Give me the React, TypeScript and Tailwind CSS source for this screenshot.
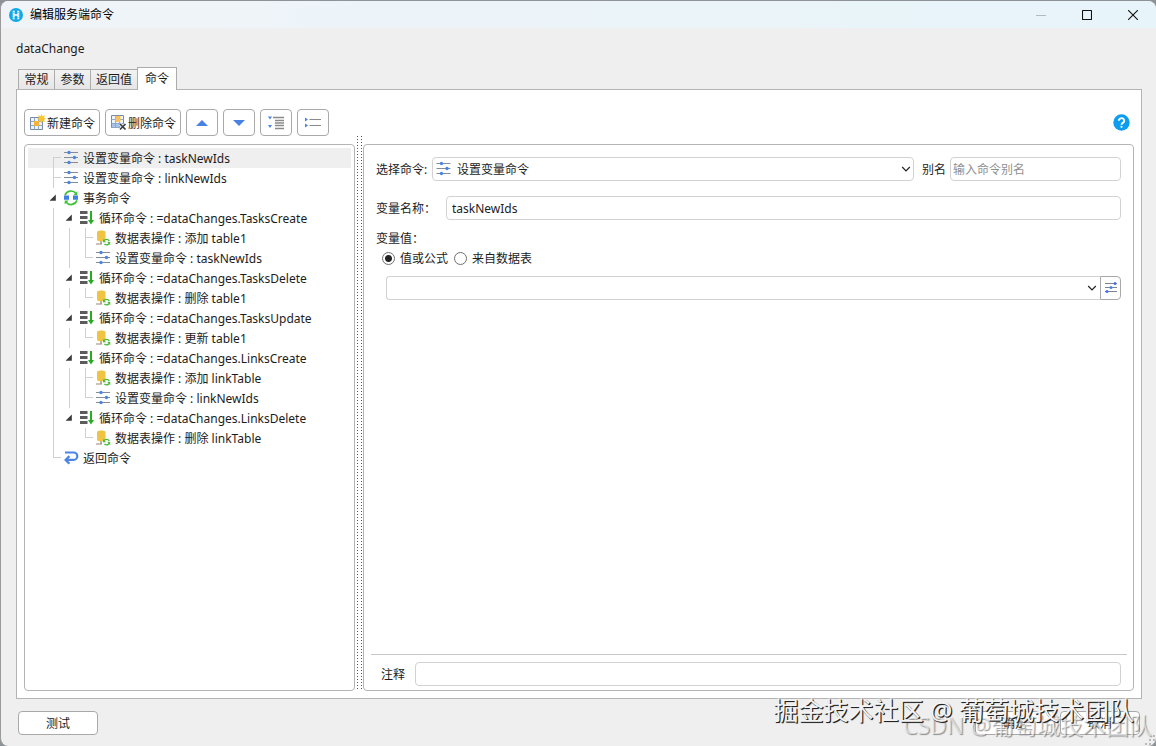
import React from "react";

type Guide = "blank" | "line" | "start" | "tee" | "elbow" | "arrow";
type IconName = "variable" | "transaction" | "loop" | "table" | "return";

interface TreeRow {
  guides: Guide[];
  icon: IconName;
  text: string;
  selected?: boolean;
}

const rows: TreeRow[] = [
  { guides: ["start"], icon: "variable", text: "设置变量命令 : taskNewIds", selected: true },
  { guides: ["tee"], icon: "variable", text: "设置变量命令 : linkNewIds" },
  { guides: ["arrow"], icon: "transaction", text: "事务命令" },
  { guides: ["line", "arrow"], icon: "loop", text: "循环命令 : =dataChanges.TasksCreate" },
  { guides: ["line", "line", "tee"], icon: "table", text: "数据表操作 : 添加 table1" },
  { guides: ["line", "line", "elbow"], icon: "variable", text: "设置变量命令 : taskNewIds" },
  { guides: ["line", "arrow"], icon: "loop", text: "循环命令 : =dataChanges.TasksDelete" },
  { guides: ["line", "line", "elbow"], icon: "table", text: "数据表操作 : 删除 table1" },
  { guides: ["line", "arrow"], icon: "loop", text: "循环命令 : =dataChanges.TasksUpdate" },
  { guides: ["line", "line", "elbow"], icon: "table", text: "数据表操作 : 更新 table1" },
  { guides: ["line", "arrow"], icon: "loop", text: "循环命令 : =dataChanges.LinksCreate" },
  { guides: ["line", "line", "tee"], icon: "table", text: "数据表操作 : 添加 linkTable" },
  { guides: ["line", "line", "elbow"], icon: "variable", text: "设置变量命令 : linkNewIds" },
  { guides: ["line", "arrow"], icon: "loop", text: "循环命令 : =dataChanges.LinksDelete" },
  { guides: ["line", "blank", "elbow"], icon: "table", text: "数据表操作 : 删除 linkTable" },
  { guides: ["elbow"], icon: "return", text: "返回命令" },
];

function VariableIcon({ className = "h-4 w-4" }: { className?: string }) {
  return (
    <svg viewBox="0 0 16 16" className={className} aria-hidden="true">
      <path d="M1 2.500h14M1 7.500h14M1 12.500h14" stroke="#858d94" strokeWidth="1.200" />
      <circle cx="6" cy="2.500" r="1.700" fill="#4c84e6" />
      <circle cx="11.500" cy="7.500" r="1.700" fill="#4c84e6" />
      <circle cx="6" cy="12.500" r="1.700" fill="#4c84e6" />
    </svg>
  );
}

function TreeIcon({ name }: { name: IconName }) {
  if (name === "variable") return <VariableIcon className="h-4 w-4 shrink-0" />;
  if (name === "transaction")
    return (
      <svg viewBox="0 0 16 16" className="h-4 w-4 shrink-0" aria-hidden="true">
        <path d="M2 5.200A6.300 6.300 0 0 1 13 3.600M14 10.300A6.300 6.300 0 0 1 3 12" fill="none" stroke="#3cc435" strokeWidth="1.700" />
        <path d="M14.300 1.200v4h-4zM1.700 14.400v-4h4z" fill="#3cc435" />
        <path d="M1 5.500h5v4.300H1zM10 5.500h5v4.300h-5z" fill="#3f80e2" />
      </svg>
    );
  if (name === "loop")
    return (
      <svg viewBox="0 0 16 16" className="h-4 w-4 shrink-0" aria-hidden="true">
        <path d="M1 1h7.500v3H1zM1 6h7.500v3H1zM1 11h7.500v3H1z" fill="#5c5c5c" />
        <path d="M11 1h2v9h2l-3 4.500L9 10h2z" fill="#22b01e" />
      </svg>
    );
  if (name === "table")
    return (
      <svg viewBox="0 0 16 16" className="h-4 w-4 shrink-0" aria-hidden="true">
        <path d="M2 2C2 0 10.500 0 10.500 2v7.700c0 2-8.500 2-8.500 0z" fill="#efc443" />
        <path d="M6 11v2.500M1 14h6" stroke="#9b8873" strokeWidth="1.200" />
        <path d="M8.500 11.400a3.200 3.200 0 0 1 5.800-.3M14.600 12.300a3 3 0 0 1-5.200 1.600" fill="none" stroke="#4dbb3b" strokeWidth="1.400" />
        <path d="M8 9v3.200h3.200zM15.200 15v-3h-3z" fill="#4dbb3b" />
      </svg>
    );
  return (
    <svg viewBox="0 0 16 16" className="h-4 w-4 shrink-0" aria-hidden="true">
      <path d="M2 2.500h8.600a3.700 3.700 0 0 1 0 7.400H3.500" fill="none" stroke="#4c84e6" strokeWidth="2.200" />
      <path d="M6.400 6.100 2.600 9.900l3.800 3.800" fill="none" stroke="#4c84e6" strokeWidth="2.200" />
    </svg>
  );
}

function GuideCell({ kind }: { kind: Guide }) {
  if (kind === "blank") return <span className="w-4 shrink-0" />;
  if (kind === "arrow")
    return (
      <span className="flex w-4 shrink-0 items-center justify-center">
        <svg viewBox="0 0 8 8" className="h-2 w-2" aria-hidden="true">
          <path d="M6.800.6v6.200H.6z" fill="#3a3a3a" />
        </svg>
      </span>
    );
  const upper = kind !== "start";
  const lower = kind !== "elbow";
  const branch = kind !== "line";
  return (
    <span className="flex w-4 shrink-0 flex-col pl-2">
      <span
        className={`h-[10px] border-[#d0d0d0] ${upper ? "border-l" : ""} ${branch ? "border-b" : ""}`}
      />
      <span className={`h-[10px] border-[#d0d0d0] ${lower ? "border-l" : ""}`} />
    </span>
  );
}

function NewIcon() {
  return (
    <svg viewBox="0 0 17 17" className="h-[17px] w-[17px] shrink-0" aria-hidden="true">
      <path d="M1.500 3.500h12v12h-12z" fill="#eef4fb" stroke="#7889a0" />
      <path d="M5.500 3.500v12M9.500 3.500v12M1.500 7.500h12M1.500 11.500h12" stroke="#8da9cd" />
      <path d="M5 7h5v5H5z" fill="#f7b23c" />
      <path
        d="m12.500 0 1 2.300L16 1.200l-1 2.500 2 1.100-2 1 1 2.500-2.500-1-1 2-1-2-2.500 1 1-2.500-2-1 2-1.100-1-2.500 2.500 1.100z"
        fill="#fcc52c"
      />
    </svg>
  );
}

function DeleteIcon() {
  return (
    <svg viewBox="0 0 17 17" className="h-[17px] w-[17px] shrink-0" aria-hidden="true">
      <path d="M1.500 1.500h12v12h-12z" fill="#eef4fb" stroke="#7889a0" />
      <path d="M2 10h11v3.500H2z" fill="#a8c3e8" />
      <path d="M5.500 1.500v12M9.500 1.500v12M1.500 5.500h12M1.500 9.500h12" stroke="#8da9cd" />
      <path d="M5.500 2h5v6h-5z" fill="#f9c25c" />
      <path d="m10 10 5.500 5.500M15.500 10 10 15.500" stroke="#fff" strokeWidth="3" />
      <path d="m10 10 5.500 5.500M15.500 10 10 15.500" stroke="#3c3c3c" strokeWidth="1.700" />
    </svg>
  );
}

const toolButton =
  "flex h-[27px] items-center justify-center rounded border border-[#a9a9a9] bg-white";
const field = "h-6 min-w-0 rounded border border-[#d2d2d2] bg-white outline-none";
const dialogButton =
  "h-6 w-20 rounded border border-[#a9a9a9] bg-white pt-px text-center";

function Chevron() {
  return (
    <svg
      viewBox="0 0 10 10"
      className="pointer-events-none absolute right-[3px] top-[7px] h-[10px] w-[10px]"
      aria-hidden="true"
    >
      <path d="m1.200 3 3.800 3.800L8.800 3" fill="none" stroke="#222" strokeWidth="1.200" />
    </svg>
  );
}

function TitleBar() {
  return (
    <header className="flex h-[27px] shrink-0 items-center bg-linear-to-r from-[#f0f4f8] to-[#e7f4fa] pl-2">
      <svg viewBox="0 0 14 14" className="h-[14px] w-[14px]" aria-hidden="true">
        <circle cx="7" cy="7" r="7" fill="#12a9e8" />
        <path d="M4.700 2.800v8.400M9.300 2.800v8.400" stroke="#fff" strokeWidth="2" strokeDasharray="1.800 .4" />
        <path d="M4.700 7h4.600" stroke="#fff" strokeWidth="1.600" />
      </svg>
      <h1 className="ml-[7px] flex-1 text-black">编辑服务端命令</h1>
      <div className="flex h-full">
        <button aria-label="最小化" disabled className="flex w-[46px] items-center justify-center">
          <svg viewBox="0 0 10 10" className="h-[10px] w-[10px]" aria-hidden="true">
            <path d="M0 5.500h10" stroke="#b3babd" />
          </svg>
        </button>
        <button aria-label="最大化" className="flex w-[46px] items-center justify-center">
          <svg viewBox="0 0 10 10" className="h-[10px] w-[10px]" aria-hidden="true">
            <rect x=".5" y=".5" width="9" height="9" rx=".5" fill="none" stroke="#111" strokeWidth="1.100" />
          </svg>
        </button>
        <button aria-label="关闭" className="flex w-[46px] items-center justify-center">
          <svg viewBox="0 0 10 10" className="h-[10px] w-[10px]" aria-hidden="true">
            <path d="m0 0 10 10M10 0 0 10" stroke="#111" strokeWidth="1.100" />
          </svg>
        </button>
      </div>
    </header>
  );
}

function Tabs() {
  const inactive =
    "-mr-px h-5 border border-b-0 border-[#acacac] bg-linear-to-b from-[#f2f2f2] to-[#e6e6e6] px-[5px]";
  return (
    <nav role="tablist" className="flex h-[22px] items-end pl-[2px]">
      <button role="tab" aria-selected="false" className={`${inactive} w-[37px]`}>常规</button>
      <button role="tab" aria-selected="false" className={`${inactive} w-[37px]`}>参数</button>
      <button role="tab" aria-selected="false" className={`${inactive} w-12`}>返回值</button>
      <button
        role="tab"
        aria-selected="true"
        className="z-10 -mb-px h-[23px] w-10 border border-b-0 border-[#acacac] bg-white"
      >
        命令
      </button>
    </nav>
  );
}

function Toolbar() {
  return (
    <div className="flex items-center gap-[5px]">
      <button className={`${toolButton} w-[76px] gap-px`}>
        <NewIcon />
        <span className="pt-[2px]">新建命令</span>
      </button>
      <button className={`${toolButton} w-[76px] gap-px`}>
        <DeleteIcon />
        <span className="pt-[2px]">删除命令</span>
      </button>
      <button aria-label="上移" className={`${toolButton} w-8`}>
        <svg viewBox="0 0 14 8" className="h-2 w-[14px]" aria-hidden="true">
          <path d="M1 7h12L7 1z" fill="#4a82e4" />
        </svg>
      </button>
      <button aria-label="下移" className={`${toolButton} w-8`}>
        <svg viewBox="0 0 14 8" className="h-2 w-[14px]" aria-hidden="true">
          <path d="M1 1h12L7 7z" fill="#4a82e4" />
        </svg>
      </button>
      <button aria-label="全部展开" className={`${toolButton} w-8`}>
        <svg viewBox="0 0 16 14" className="h-[14px] w-4" aria-hidden="true">
          <path d="M5 1.500h11M7 4.500h9M7 7h9M7 9.500h9M7 12.500h9" stroke="#8a8a8a" strokeWidth="1.500" />
          <path d="M0 .5h4L2 3.500zM0 9h4l-2 3z" fill="#4a82e4" />
        </svg>
      </button>
      <button aria-label="全部折叠" className={`${toolButton} w-8`}>
        <svg viewBox="0 0 16 14" className="h-[14px] w-4" aria-hidden="true">
          <path d="M4.500 3.500H16M4.500 9.500H16" stroke="#8a8a8a" strokeWidth="1.200" />
          <path d="M0 1.500v4l3-2zM0 7.500v4l3-2z" fill="#4a82e4" />
        </svg>
      </button>
      <button aria-label="帮助" className="ml-auto mr-1">
        <svg viewBox="0 0 17 17" className="h-[17px] w-[17px]" aria-hidden="true">
          <circle cx="8.500" cy="8.500" r="8.200" fill="#0c9df0" />
          <path d="M5.800 6.700a2.700 2.500 0 1 1 4.300 2c-1 .7-1.600 1-1.600 2" fill="none" stroke="#fff" strokeWidth="1.900" />
          <circle cx="8.500" cy="12.800" r="1.100" fill="#fff" />
        </svg>
      </button>
    </div>
  );
}

function CommandTree() {
  return (
    <ul role="tree" aria-label="命令" className="mt-2 w-[331px] shrink-0 rounded border border-[#b4b4b4] bg-white p-[3px]">
      {rows.map((row, i) => (
        <li
          key={i}
          role="treeitem"
          aria-level={row.guides.length}
          aria-selected={!!row.selected}
          className={`flex h-5 pl-[17px] ${row.selected ? "bg-[#efefef]" : ""}`}
        >
          {row.guides.map((g, j) => (
            <GuideCell key={j} kind={g} />
          ))}
          <span className="flex items-center gap-1 whitespace-nowrap pl-[2px]">
            <TreeIcon name={row.icon} />
            <span className="pt-[2px]">{row.text}</span>
          </span>
        </li>
      ))}
    </ul>
  );
}

function Splitter() {
  return (
    <div role="separator" aria-orientation="vertical" className="ml-[2px] mr-px flex w-[5px] shrink-0 justify-between">
      <span className="w-px bg-[repeating-linear-gradient(to_bottom,#555_0_1px,transparent_1px_3px)]" />
      <span className="w-px bg-[repeating-linear-gradient(to_bottom,#555_0_1px,transparent_1px_3px)]" />
    </div>
  );
}

function Radio({ id, label, checked }: { id: string; label: string; checked?: boolean }) {
  return (
    <label htmlFor={id} className="flex items-center gap-[5px]">
      <input
        id={id}
        type="radio"
        name="source"
        defaultChecked={checked}
        className="h-[13px] w-[13px] appearance-none rounded-full border border-[#707070] bg-white checked:bg-[radial-gradient(circle,#222_0_3px,transparent_4px)]"
      />
      <span className="pt-px">{label}</span>
    </label>
  );
}

function Editor() {
  return (
    <form className="mt-2 flex min-w-0 flex-1 flex-col rounded border border-[#b4b4b4] bg-white pb-1 pl-[7px] pr-[6px] pt-3">
      <div className="flex flex-col pl-[5px] pr-[6px]">
        <div className="flex items-center">
          <label htmlFor="command" className="w-14 pt-[2px]">选择命令:</label>
          <div className="relative flex min-w-0 flex-1">
            <VariableIcon className="pointer-events-none absolute left-[3px] top-1 h-4 w-[17px]" />
            <select id="command" className={`${field} w-full appearance-none border-[#c2c2c2] pl-6 pt-px`}>
              <option>设置变量命令</option>
            </select>
            <Chevron />
          </div>
          <label htmlFor="alias" className="ml-2 w-7 pt-[2px]">别名</label>
          <input
            id="alias"
            placeholder="输入命令别名"
            className={`${field} w-[171px] px-[2px] pt-px placeholder:text-[#8f8f8f]`}
          />
        </div>
        <div className="mt-[15px] flex items-center">
          <label htmlFor="name" className="w-[70px] pt-[2px]">变量名称：</label>
          <input id="name" defaultValue="taskNewIds" className={`${field} flex-1 px-[5px]`} />
        </div>
        <fieldset className="mt-[9px]">
          <legend className="h-5 leading-5">变量值：</legend>
          <div className="flex h-[18px] items-center gap-[6px] pl-[6px]">
            <Radio id="formula" label="值或公式" checked />
            <Radio id="table" label="来自数据表" />
          </div>
        </fieldset>
        <div className="mt-[9px] flex pl-[10px]">
          <div className="relative flex min-w-0 flex-1">
            <select aria-label="值或公式" className={`${field} w-full appearance-none rounded-r-none border-r-0 px-[5px]`}>
              <option></option>
            </select>
            <Chevron />
          </div>
          <button
            type="button"
            aria-label="编辑公式"
            className="flex h-6 w-[21px] items-center justify-center rounded-r border border-[#a9a9a9] bg-white"
          >
            <svg viewBox="0 0 12 12" className="h-3 w-3" aria-hidden="true">
              <path d="M0 1.500h12M0 5.500h12M0 9.500h12" stroke="#7d858c" />
              <circle cx="10" cy="1.500" r="1.500" fill="#4c6ef0" />
              <circle cx="6" cy="5.500" r="1.500" fill="#4c84e6" />
              <circle cx="2" cy="9.500" r="1.500" fill="#4c6ef0" />
            </svg>
          </button>
        </div>
      </div>
      <div className="mt-auto flex items-center border-t border-[#c8c8c8] pl-[10px] pr-[6px] pt-[7px]">
        <label htmlFor="note" className="w-[34px] pt-[2px]">注释</label>
        <input id="note" className={`${field} flex-1 px-[5px]`} />
      </div>
    </form>
  );
}

const watermark = "pointer-events-none absolute whitespace-nowrap";

export default function App() {
  return (
    <div className="flex min-h-screen flex-col bg-[#8d9397] pt-px font-['Noto_Sans','Noto_Sans_CJK_SC',sans-serif] text-[12px] leading-4 text-[#1c1c1c]">
      <div className="relative flex flex-1 flex-col overflow-hidden rounded-lg border-l border-[#9b9b9b] bg-[#efefef]">
        <TitleBar />
        <p className="mt-[13px] px-[15px]">dataChange</p>
        <main className="mt-[10px] flex flex-1 flex-col pl-[15px] pr-[14px]">
          <Tabs />
          <section className="flex flex-1 flex-col border border-[#b4b4b4] bg-white px-[7px] pb-[7px] pt-[19px]">
            <Toolbar />
            <div className="flex flex-1">
              <CommandTree />
              <Splitter />
              <Editor />
            </div>
          </section>
        </main>
        <footer className="flex gap-[5px] pb-[11px] pl-[17px] pr-4 pt-3">
          <button className={`${dialogButton} mr-auto`}>测试</button>
          <button className={dialogButton}>确定</button>
          <button className={dialogButton}>取消</button>
        </footer>
        <span
          className={`${watermark} bottom-[6px] right-1 text-[23px] leading-[30px] text-white/60 [text-shadow:1px_1px_1px_rgba(80,80,80,0.6)]`}
        >
          CSDN @葡萄城技术团队
        </span>
        <span
          className={`${watermark} bottom-5 right-[22px] text-[25px] leading-8 text-[#f4f4f4] [text-shadow:1px_1px_0_#222,1px_1px_1px_#444]`}
        >
          掘金技术社区 @ 葡萄城技术团队
        </span>
        <svg viewBox="0 0 12 12" className="pointer-events-none absolute bottom-0 right-0 h-3 w-3" aria-hidden="true">
          <path d="M9 1h2v2H9zM9 5h2v2H9zM9 9h2v2H9zM5 5h2v2H5zM5 9h2v2H5zM1 9h2v2H1z" fill="#b9b9b9" />
        </svg>
      </div>
    </div>
  );
}
